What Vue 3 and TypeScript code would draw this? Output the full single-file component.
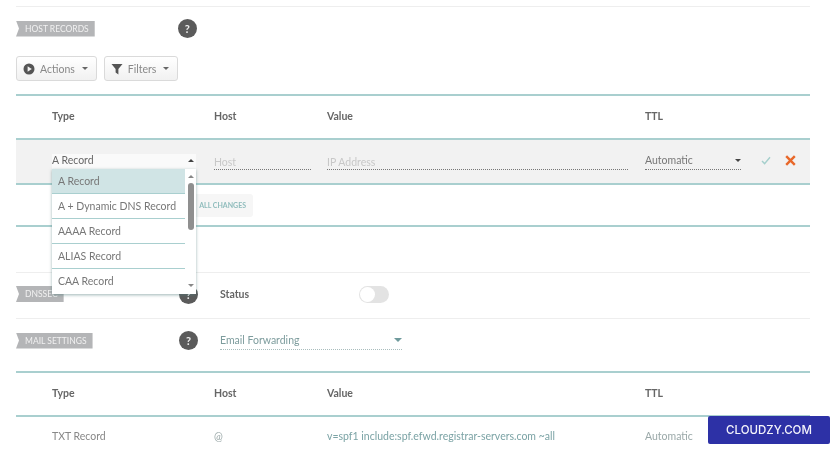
<template>
  <div class="page">
    <section class="tag-row host-tag">
      <span class="tag">HOST RECORDS</span>
      <span class="help">?</span>
    </section>

    <div class="toolbar">
      <button class="btn">
        <svg class="ico" width="12" height="12" viewBox="0 0 12 12"><circle cx="6" cy="6" r="5.5" fill="#555" /><path d="M4.6 3.2 8.8 6 4.6 8.8z" fill="#f2f2f2" /></svg>
        Actions <i class="caret"></i>
      </button>
      <button class="btn">
        <svg class="ico" width="12" height="12" viewBox="0 0 12 12"><path d="M0.5 1h11L7.4 6v5.5L4.6 9.6V6z" fill="#555" /></svg>
        Filters <i class="caret"></i>
      </button>
    </div>

    <div class="cols head first-head">
      <span v-for="c in columns" :key="c">{{ c }}</span>
    </div>

    <div class="cols edit-row">
      <div class="field type-field">A Record <i class="caret up"></i></div>
      <div class="field ghost host-field">Host</div>
      <div class="field ghost value-field">IP Address</div>
      <div class="ttl-cell">
        <div class="field ttl-field">Automatic <i class="caret dark"></i></div>
        <svg class="act check" width="10" height="9" viewBox="0 0 10 9"><path d="M1 5l2.6 2.6L9 1.2" fill="none" stroke="#a5cfcc" stroke-width="1.4" /></svg>
        <svg class="act" width="11" height="11" viewBox="0 0 11 11"><path d="M1.2 1.2l8.6 8.6M9.8 1.2 1.2 9.8" fill="none" stroke="#e8682a" stroke-width="2.4" /></svg>
      </div>
    </div>

    <div class="save-row">
      <span class="save">ALL CHANGES</span>
    </div>

    <div class="setting dnssec">
      <div class="tag-wrap"><span class="tag">DNSSEC</span></div>
      <span class="help">?</span>
      <strong class="status">Status</strong>
      <span class="toggle"><i></i></span>
    </div>

    <div class="setting mail">
      <div class="tag-wrap"><span class="tag">MAIL SETTINGS</span></div>
      <span class="help">?</span>
      <div class="mail-select">Email Forwarding <i class="caret teal"></i></div>
    </div>

    <div class="cols head second-head">
      <span v-for="c in columns" :key="c">{{ c }}</span>
    </div>

    <div class="cols txt-row">
      <span class="txt-type">TXT Record</span>
      <span class="muted">@</span>
      <span class="val">v=spf1 include:spf.efwd.registrar-servers.com ~all</span>
      <span class="muted">Automatic</span>
    </div>

    <div class="dropdown">
      <ul class="options">
        <li v-for="(r, i) in records" :key="r" :class="{ active: i === 0 }">{{ r }}</li>
      </ul>
      <div class="scroll">
        <i class="caret up small"></i>
        <span class="thumb"></span>
        <i class="caret small"></i>
      </div>
    </div>

    <div class="brand">CLOUDZY.COM</div>
  </div>
</template>

<script setup lang="ts">
const columns: string[] = ['Type', 'Host', 'Value', 'TTL']
const records: string[] = ['A Record', 'A + Dynamic DNS Record', 'AAAA Record', 'ALIAS Record', 'CAA Record']
</script>

<style>
html, body { background: #fff; }
</style>

<style scoped>
.page {
  position: relative;
  width: 835px;
  height: 470px;
  box-sizing: border-box;
  padding: 6px 25px 0 16px;
  overflow: hidden;
  background: #fff;
  font-family: Lato, "Open Sans", sans-serif;
  font-size: 10.5px;
  color: #777;
  filter: blur(0.35px);
}
.tag-row {
  display: flex;
  align-items: center;
  height: 43px;
  border-top: 1px solid #eee;
}
.tag {
  display: inline-block;
  height: 16px;
  line-height: 16px;
  padding: 0 6px 0 9px;
  background: #b4b5b7;
  color: #f1f1f1;
  font-size: 8.5px;
  clip-path: polygon(0 0, 100% 0, 100% 100%, 0 100%, 3px 50%);
}
.help {
  display: flex;
  align-items: center;
  justify-content: center;
  width: 19px;
  height: 19px;
  border-radius: 50%;
  background: #5b5b5b;
  color: #eee;
  font-size: 11px;
  font-weight: 700;
}
.host-tag .help { margin-left: 83px; }
.toolbar {
  display: flex;
  gap: 7px;
  margin-top: 6px;
  height: 25px;
}
.btn {
  display: flex;
  align-items: center;
  gap: 5px;
  padding: 0 8px 0 6px;
  border: 1px solid #dadada;
  border-radius: 3px;
  background: linear-gradient(#fff, #f1f1f1);
  font: inherit;
  color: #888;
}
.btn .caret { margin-left: 2px; }
.caret {
  display: inline-block;
  width: 0;
  height: 0;
  margin-left: 4px;
  border-left: 3.5px solid transparent;
  border-right: 3.5px solid transparent;
  border-top: 3.5px solid #666;
}
.caret.up { border-top: 0; border-bottom: 3.5px solid #444; }
.caret.dark { border-top-color: #444; }
.caret.teal { border-left-width: 4px; border-right-width: 4px; border-top: 4px solid #6f9a9c; }
.caret.small { margin: 0; border-left-width: 3px; border-right-width: 3px; border-top-color: #888; }
.caret.up.small { border-bottom-color: #888; }
.cols {
  display: grid;
  grid-template-columns: 162px 113px 318px 1fr;
  padding-left: 36px;
  align-items: center;
}
.head {
  height: 40px;
  padding-bottom: 2px;
  border-top: 2px solid #a9cfcf;
  border-bottom: 2px solid #a9cfcf;
  font-weight: 700;
  color: #666;
}
.first-head { margin-top: 13px; }
.edit-row {
  height: 43px;
  background: #f2f2f2;
  border-top: 2px solid #a9cfcf;
  border-bottom: 2px solid #a9cfcf;
  margin-top: -2px;
}
.field {
  position: relative;
  display: flex;
  justify-content: space-between;
  align-items: center;
  height: 16px;
  padding-bottom: 2px;
  border-bottom: 1px dotted #777;
  box-sizing: border-box;
}
.type-field { width: 144px; background: #fafafa; color: #666; }
.type-field .caret { margin-right: 2px; }
.ghost { padding-bottom: 0; padding-top: 1px; color: #c8c8c8; }
.host-field { width: 97px; }
.value-field { width: 301px; }
.ttl-cell { display: flex; align-items: center; }
.ttl-field { width: 96px; }
.act { margin-left: 14px; margin-top: -2px; }
.act.check { margin-left: 20px; }
.save-row {
  height: 42px;
  display: flex;
  align-items: center;
  border-bottom: 2px solid #a9cfcf;
  box-sizing: border-box;
}
.save {
  margin-left: 114px;
  width: 123px;
  height: 23px;
  line-height: 23px;
  box-sizing: border-box;
  padding-right: 7px;
  border-radius: 3px;
  background: #f6f6f6;
  color: #8fbcbc;
  font-size: 7px;
  font-weight: 700;
  text-align: right;
  white-space: nowrap;
}
.setting {
  display: flex;
  align-items: center;
  box-sizing: border-box;
}
.dnssec {
  height: 47px;
  margin-top: 45px;
  padding-bottom: 3px;
  border-top: 1px solid #eee;
  border-bottom: 1px solid #eee;
}
.mail { height: 41px; padding-top: 2px; }
.tag-wrap { width: 163px; }
.status { margin-left: 22px; font-weight: 700; color: #666; }
.toggle {
  display: block;
  width: 30px;
  height: 17px;
  margin-left: 110px;
  padding: 1px;
  box-sizing: border-box;
  border-radius: 9px;
  background: #e3e3e3;
}
.toggle i { display: block; width: 15px; height: 15px; border-radius: 50%; background: #fff; }
.mail-select {
  display: flex;
  justify-content: space-between;
  align-items: center;
  width: 182px;
  height: 18px;
  margin-left: 22px;
  border-bottom: 1px dotted #a9bdbd;
  box-sizing: border-box;
  color: #7d9c9d;
}
.second-head { margin-top: 11px; }
.txt-row { height: 38px; }
.txt-type { color: #888; }
.muted { color: #9aa8a8; }
.val { color: #7ba3a5; }
.dropdown {
  position: absolute;
  left: 52px;
  top: 169px;
  display: flex;
  width: 144px;
  height: 125px;
  background: #fff;
  box-shadow: 0 1px 3px rgba(80, 120, 120, .55);
}
.options {
  flex: 1;
  margin: 0;
  padding: 0;
  list-style: none;
}
.options li {
  height: 25px;
  line-height: 24px;
  padding-left: 6px;
  box-sizing: border-box;
  border-bottom: 1px solid #a9cfcf;
  white-space: nowrap;
}
.options li:last-child { border-bottom: 0; }
.options li.active { background: #d0e4e5; }
.scroll {
  width: 11px;
  display: flex;
  flex-direction: column;
  align-items: center;
  padding: 6px 0 7px;
  box-sizing: border-box;
}
.thumb { width: 6px; height: 47px; margin-top: 5px; margin-bottom: auto; border-radius: 3px; background: #8f8f8f; }
.brand {
  position: absolute;
  left: 708px;
  top: 416px;
  width: 122px;
  height: 28px;
  line-height: 28px;
  text-align: center;
  border-radius: 2px;
  background: #2d31a6;
  color: #f4f4fb;
  font-family: Inter, sans-serif;
  font-size: 11.5px;
  font-weight: 500;
}
</style>
